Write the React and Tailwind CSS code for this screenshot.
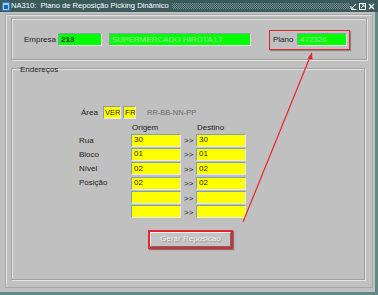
import React from 'react';

function Field({ value = '', className = '', textClass = 'text-[#2b2b00]' }) {
  return (
    <div
      className={`h-[13px] flex items-center pl-[2px] border-t border-l border-t-[#7fa3aa] border-l-[#7fa3aa] border-r border-b border-r-[#e6eaea] border-b-[#e6eaea] leading-none whitespace-nowrap overflow-hidden ${textClass} ${className}`}
    >
      {value}
    </div>
  );
}

function TitleBar() {
  return (
    <div className="h-[12px] bg-[#3b5a5c] flex items-center text-white text-[7.6px] leading-none">
      <svg width="8" height="9" viewBox="0 0 8 9" className="ml-[2px] mr-[1px]">
        <rect x="0" y="0" width="8" height="9" fill="#2f7fd0" />
        <rect x="1" y="1" width="6" height="7" fill="#9fd0f5" />
        <rect x="2" y="3" width="4" height="4" fill="#1f5fb0" />
      </svg>
      <span className="whitespace-nowrap">NA310:&nbsp; Plano de Reposição Picking Dinâmico</span>
      <svg width="180" height="6" className="ml-[3px]">
        <defs>
          <pattern id="dots" width="2" height="2" patternUnits="userSpaceOnUse">
            <rect x="0" y="0" width="1" height="1" fill="#6f8c8d" />
            <rect x="1" y="1" width="1" height="1" fill="#6f8c8d" />
          </pattern>
        </defs>
        <rect width="180" height="6" fill="url(#dots)" />
      </svg>
      <div className="ml-auto mr-[3px] flex items-center gap-[2px]">
        <svg width="7" height="7" viewBox="0 0 7 7">
          <path d="M6 1 L2 5 M1 3 L1 6 L4 6 M1 6.5 H6.5" stroke="white" strokeWidth="1" fill="none" />
        </svg>
        <svg width="7" height="7" viewBox="0 0 7 7">
          <rect x="0.5" y="0.5" width="6" height="6" stroke="white" fill="none" />
          <path d="M2 5 L5 2 M3 2 H5 V4" stroke="white" strokeWidth="1" fill="none" />
        </svg>
        <svg width="7" height="7" viewBox="0 0 7 7">
          <path d="M1 1 L6 6 M6 1 L1 6" stroke="white" strokeWidth="1.4" />
        </svg>
      </div>
    </div>
  );
}

export default function App() {
  const labels = ['Rua', 'Bloco', 'Nível', 'Posição'];
  const rows = [
    ['30', '30'],
    ['01', '01'],
    ['02', '02'],
    ['02', '02'],
    ['', ''],
    ['', ''],
  ];

  return (
    <div className="relative w-[378px] h-[295px] overflow-hidden bg-[#c0c0c0] font-['Liberation_Sans',Arial,sans-serif] text-[8px] text-[#1c1c1c] flex flex-col">
      <TitleBar />

      <div className="flex-1 flex flex-col border-r-[3px] border-b-[3px] border-r-[#5f8888] border-b-[#5f8888] pt-[2px] pl-[5px] pr-[2px] pb-[4px]">
        <div className="flex-1 flex flex-col border border-[#a6a6a6] shadow-[inset_1px_1px_0_#e2e2e2] pt-[3px] pl-[5px] pr-[5px] pb-[7px]">
          {/* Empresa */}
          <div className="h-[42px] flex items-center border border-[#a0a0a0] shadow-[inset_1px_1px_0_#e4e4e4,1px_1px_0_#e4e4e4] pl-[12px] pt-[1px]">
            <span className="w-[34px]">Empresa</span>
            <Field value="213" className="w-[44px] bg-[#00ff00] font-bold" textClass="text-[#0a2a0a]" />
            <Field
              value="SUPERMERCADO HIROTA LT"
              className="w-[142px] ml-[7px] bg-[#00ff00]"
              textClass="text-[#a6e6a6]"
            />
            <div className="ml-[18px] h-[20px] flex items-center border-[1.5px] border-[#e3262b] shadow-[1px_1px_1px_#8a8a8a] pl-[3px] pr-[2px]">
              <span className="w-[24px]">Plano</span>
              <Field value="472326" className="w-[50px] bg-[#00ff00]" textClass="text-[#a6e6a6]" />
            </div>
          </div>

          {/* Endereços */}
          <div className="flex-1 mt-[8px] mr-[2px] border border-[#a0a0a0] shadow-[inset_1px_1px_0_#e4e4e4,1px_1px_0_#e4e4e4] flex flex-col">
            <span className="ml-[7px] -mt-[3px] px-[1px] self-start leading-none">Endereços</span>

            <div className="flex items-center mt-[32px] ml-[69px] h-[13px]">
              <span className="w-[22px]">Área</span>
              <Field value="VER" className="w-[18px] !pl-[1px] text-[7.5px] bg-[#ffff00]" />
              <Field value="FR" className="w-[13px] ml-[2px] !pl-[1px] bg-[#ffff00]" />
              <span className="ml-[11px] text-[7.5px] text-[#6a6a6a]">RR-BB-NN-PP</span>
            </div>

            <div className="flex mt-[3px] ml-[120px] h-[11px] items-center">
              <span className="w-[65px]">Origem</span>
              <span>Destino</span>
            </div>

            <div className="flex ml-[67px]">
              <div className="w-[52px] flex flex-col pt-[1px]">
                {labels.map((l) => (
                  <span key={l} className="h-[14px] leading-[14px]">{l}</span>
                ))}
              </div>
              <div className="flex flex-col gap-[0.4px]">
                {rows.map((r, i) => (
                  <div key={i} className="flex items-center">
                    <Field value={r[0]} className="w-[50px] bg-[#ffff00]" />
                    <span className="w-[15px] pl-[3px] pt-[2px]">&gt;&gt;</span>
                    <Field value={r[1]} className="w-[50px] bg-[#ffff00]" />
                  </div>
                ))}
              </div>
            </div>

            <div className="mt-[11px] ml-[136px] self-start border-2 border-[#e3262b] shadow-[1px_1px_1px_#7a7a7a]">
              <div className="w-[81px] h-[15px] flex items-center justify-center bg-[#c4c4c4] border border-t-[#f0f0f0] border-l-[#f0f0f0] border-r-[#6e6e6e] border-b-[#6e6e6e] text-[#eeeeee] [text-shadow:1px_1px_0_#9a9a9a]">
                Gerar Reposicao
              </div>
            </div>
          </div>
        </div>
      </div>

      {/* annotation arrow */}
      <svg className="absolute left-0 top-0 pointer-events-none" width="378" height="295">
        <line x1="243" y1="222" x2="310" y2="57" stroke="#e8262b" strokeWidth="1.2" />
        <path d="M312 52 L307.5 58.5 L312.5 59.5 Z" fill="#e8262b" />
      </svg>
    </div>
  );
}
